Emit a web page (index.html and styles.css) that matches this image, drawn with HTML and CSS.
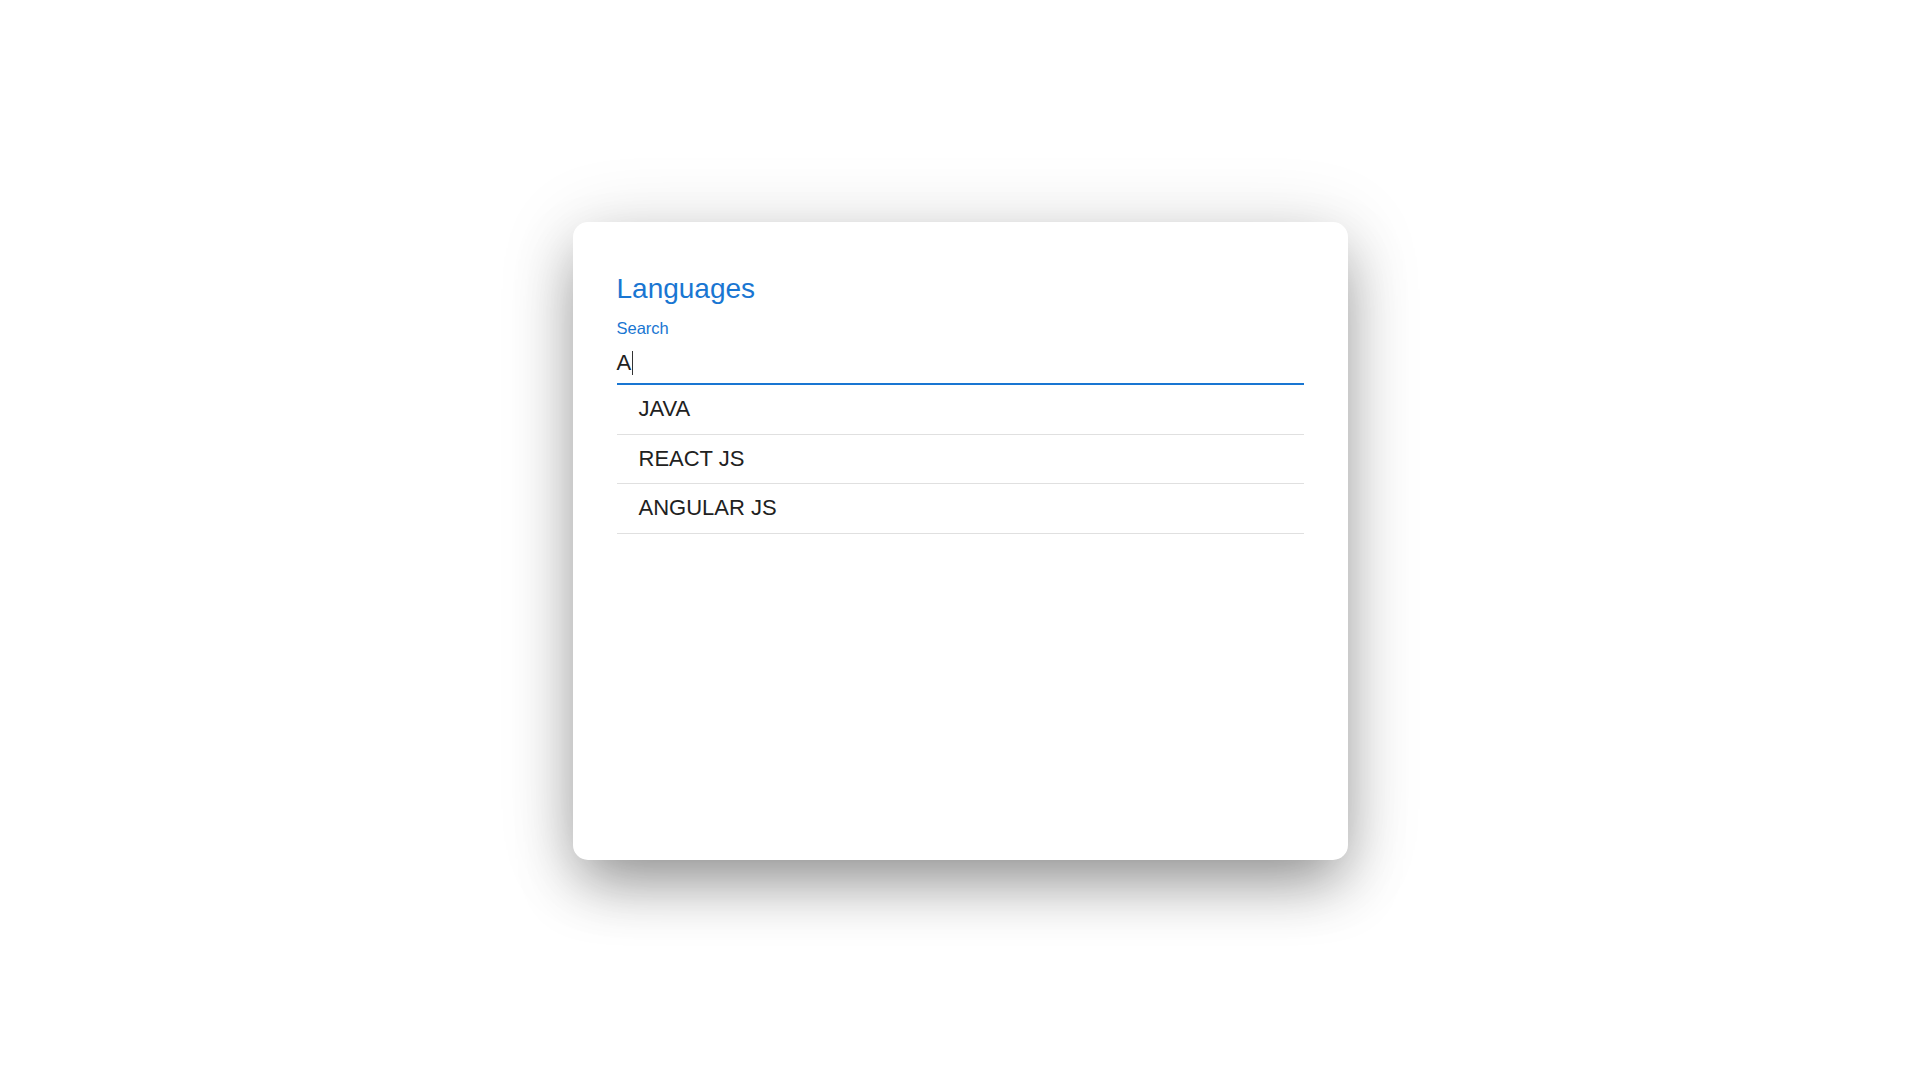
FILE: index.html
```html
<!DOCTYPE html>
<html lang="en">
<head>
<meta charset="utf-8">
<title>Languages</title>
<link rel="stylesheet" href="styles.css">
</head>
<body>
<main class="page">
  <section class="card">
    <h1 class="title">Languages</h1>
    <label class="field">
      <span class="field-label">Search</span>
      <span class="field-input">A<span class="caret"></span></span>
    </label>
    <ul class="list">
      <li class="item">JAVA</li>
      <li class="item">REACT JS</li>
      <li class="item">ANGULAR JS</li>
    </ul>
  </section>
</main>
</body>
</html>
```
FILE: styles.css
```css
html, body {
  margin: 0;
  padding: 0;
  background: #ffffff;
}
body {
  font-family: "Liberation Sans", Arial, sans-serif;
  color: #212121;
}
.page {
  box-sizing: border-box;
  height: 100vh;
  padding-top: 2px;
  display: flex;
  align-items: center;
  justify-content: center;
}
.card {
  box-sizing: border-box;
  width: 775px;
  height: 638px;
  padding: 51px 44px 44px;
  background: #ffffff;
  border-radius: 15px;
  box-shadow: 0 28px 60px -8px rgba(0, 0, 0, 0.38), 0 8px 80px rgba(0, 0, 0, 0.14);
  display: flex;
  flex-direction: column;
}
.title {
  margin: 0;
  font-size: 28px;
  line-height: 32px;
  font-weight: 400;
  color: #1976d2;
}
.field {
  display: flex;
  flex-direction: column;
  margin-top: 13px;
  border-bottom: 2px solid #1976d2;
}
.field-label {
  font-size: 16.5px;
  line-height: 20px;
  color: #1976d2;
}
.field-input {
  margin-top: 11px;
  padding-bottom: 6px;
  font-size: 22px;
  line-height: 28px;
  color: #212121;
  display: flex;
  align-items: center;
}
.caret {
  display: inline-block;
  width: 1px;
  height: 24px;
  margin-left: 1px;
  background: #333333;
}
.list {
  list-style: none;
  margin: 0;
  padding: 0;
}
.item {
  padding: 10px 22px 10.5px;
  font-size: 22px;
  line-height: 28px;
  border-bottom: 1px solid #e0e0e0;
  color: #212121;
}
```
